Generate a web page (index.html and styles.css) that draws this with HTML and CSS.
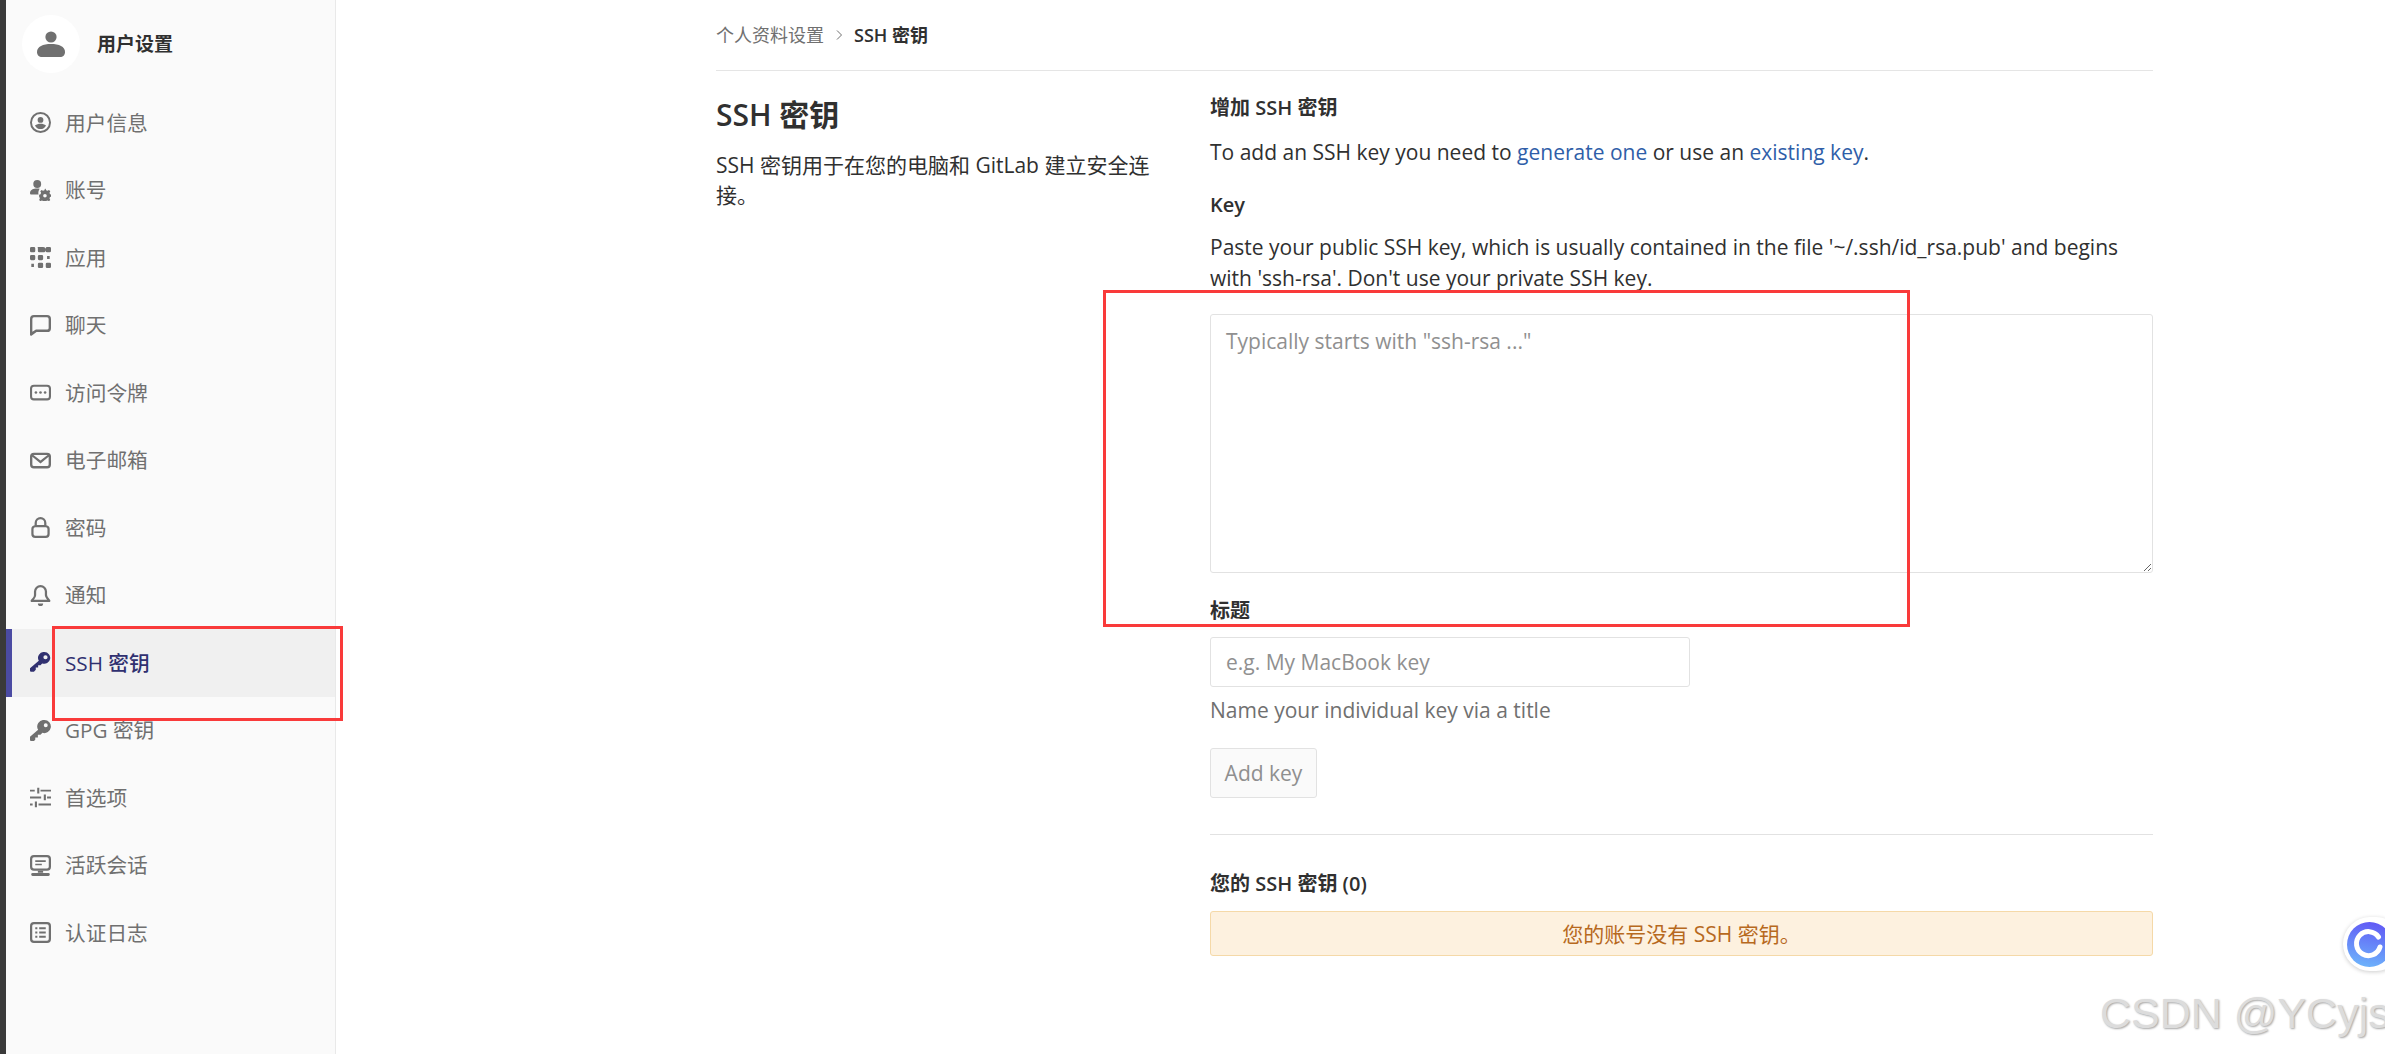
FILE: index.html
```html
<!DOCTYPE html>
<html lang="zh-CN">
<head>
<meta charset="utf-8">
<title>SSH 密钥</title>
<link rel="stylesheet" href="styles.css">
</head>
<body>
<div class="strip"></div>
<aside class="sidebar">
  <div class="side-head">
    <span class="avatar">
      <svg class="avatar-icon" viewBox="0 0 28 28"><circle cx="14" cy="7" r="5.6"/><path d="M0 22c0-5.500 6-8 14-8s14 2.500 14 8c0 3-2 5-5 5H5c-3 0-5-2-5-5z"/></svg>
    </span>
    <span class="side-title">用户设置</span>
  </div>
  <nav class="side-nav">
    <a class="nav-item"><svg class="ico" viewBox="0 0 16 16"><path fill-rule="evenodd" d="M8 0a8 8 0 1 1 0 16A8 8 0 0 1 8 0zm0 1.500a6.500 6.500 0 1 0 0 13 6.500 6.500 0 0 0 0-13z"/><circle cx="8" cy="6" r="2.200"/><path d="M3.800 10.200C5 9.400 6.400 9 8 9s3 .4 4.200 1.200C11.400 12 9.800 13 8 13s-3.400-1-4.200-2.800z"/></svg><span>用户信息</span></a>
    <a class="nav-item"><svg class="ico" viewBox="0 0 16 16"><circle cx="5.500" cy="3" r="3"/><path d="M0 10c0-2.500 2.500-3.500 5.500-3.500.7 0 1.300.1 1.900.2C6.500 8 6.100 9.500 6.500 11H1c-.6 0-1-.4-1-1z"/><path fill-rule="evenodd" d="M11.500 7l.4 1.200 1.100.4 1.100-.6 1 1-.6 1.100.4 1.100 1.100.4v1.400l-1.100.4-.4 1.100.6 1.100-1 1-1.100-.6-1.100.4-.4 1.100h-1.400l-.4-1.100-1.100-.4-1.100.6-1-1 .6-1.100-.4-1.100L6.500 13v-1.400l1.100-.4.4-1.100-.6-1.100 1-1 1.100.6 1.100-.4.400-1.200zm-.5 4a1.400 1.400 0 1 0 0 2.800 1.400 1.400 0 0 0 0-2.800z" transform="translate(0.500 -0.300) scale(.99)"/></svg><span>账号</span></a>
    <a class="nav-item"><svg class="ico" viewBox="0 0 16 16"><path d="M1 0h2a1 1 0 0 1 1 1v2a1 1 0 0 1-1 1H1a1 1 0 0 1-1-1V1a1 1 0 0 1 1-1zm5 0h4a1 1 0 0 1 0 4H7a1 1 0 0 1-1-1V1a1 1 0 0 1 0-1zm7 0h2a1 1 0 0 1 1 1v2a1 1 0 0 1-1 1h-2a1 1 0 0 1-1-1V1a1 1 0 0 1 1-1zM1 6h2a1 1 0 0 1 1 1v2a1 1 0 0 1-1 1H1a1 1 0 0 1-1-1V7a1 1 0 0 1 1-1zm6 0h2a1 1 0 0 1 1 1v2a1 1 0 0 1-1 1H7a1 1 0 0 1-1-1V7a1 1 0 0 1 1-1zm6 .800h2v2.400h-2zM1 12.800h2v2.400H1zm6-.800h2a1 1 0 0 1 1 1v2a1 1 0 0 1-1 1H7a1 1 0 0 1-1-1v-2a1 1 0 0 1 1-1zm6 0h2a1 1 0 0 1 1 1v2a1 1 0 0 1-1 1h-2a1 1 0 0 1-1-1v-2a1 1 0 0 1 1-1z"/></svg><span>应用</span></a>
    <a class="nav-item"><svg class="ico" viewBox="0 0 16 16"><path fill-rule="evenodd" d="M3 0h10a3 3 0 0 1 3 3v7a3 3 0 0 1-3 3H5l-3.600 2.700A.9.9 0 0 1 0 15V3a3 3 0 0 1 3-3zm0 1.800A1.200 1.200 0 0 0 1.800 3v9.800L4.500 11H13a1.200 1.200 0 0 0 1.200-1V3A1.200 1.200 0 0 0 13 1.800z"/></svg><span>聊天</span></a>
    <a class="nav-item"><svg class="ico" viewBox="0 0 16 16"><path fill-rule="evenodd" d="M3 2h10a3 3 0 0 1 3 3v6a3 3 0 0 1-3 3H3a3 3 0 0 1-3-3V5a3 3 0 0 1 3-3zm0 1.600A1.400 1.400 0 0 0 1.600 5v6A1.400 1.400 0 0 0 3 12.400h10a1.400 1.400 0 0 0 1.400-1.400V5A1.400 1.400 0 0 0 13 3.600z"/><circle cx="4.500" cy="8" r="1"/><circle cx="8" cy="8" r="1"/><circle cx="11.500" cy="8" r="1"/></svg><span>访问令牌</span></a>
    <a class="nav-item"><svg class="ico" viewBox="0 0 16 16"><path fill-rule="evenodd" d="M3 2h10a3 3 0 0 1 3 3v6a3 3 0 0 1-3 3H3a3 3 0 0 1-3-3V5a3 3 0 0 1 3-3zm-.4 1.800L8 8l5.400-4.200zM1.800 5.200V11A1.200 1.200 0 0 0 3 12.200h10a1.200 1.200 0 0 0 1.200-1.200V5.200L8 10.200z"/></svg><span>电子邮箱</span></a>
    <a class="nav-item"><svg class="ico" viewBox="0 0 16 16"><path fill-rule="evenodd" d="M8 0a4.500 4.500 0 0 1 4.500 4.500V6.200A3 3 0 0 1 15 9.100V13a3 3 0 0 1-3 3H4a3 3 0 0 1-3-3V9.100a3 3 0 0 1 2.500-2.900V4.500A4.500 4.500 0 0 1 8 0zm0 1.700a2.800 2.800 0 0 0-2.800 2.800v1.600h5.600V4.500A2.800 2.800 0 0 0 8 1.700zM4 7.800A1.300 1.300 0 0 0 2.700 9.100V13A1.300 1.300 0 0 0 4 14.300h8a1.300 1.300 0 0 0 1.300-1.300V9.100A1.300 1.300 0 0 0 12 7.800z"/></svg><span>密码</span></a>
    <a class="nav-item"><svg class="ico" viewBox="0 0 16 16"><path fill-rule="evenodd" d="M8 0a5 5 0 0 1 5 5v2.500c0 .8.600 1.800 2.200 3.700.7.900.4 1.800-.7 1.800h-13c-1.100 0-1.400-.9-.7-1.800C3 9.300 3 8.300 3 7.500V5a5 5 0 0 1 5-5zm0 1.700A3.300 3.300 0 0 0 4.700 5v2.500c0 1.200-.5 2.300-1.700 3.800h10c-1.200-1.500-1.700-2.600-1.700-3.800V5A3.300 3.300 0 0 0 8 1.700z"/><path d="M6 14h4a2 2 0 0 1-4 0z"/></svg><span>通知</span></a>
    <a class="nav-item is-active"><svg class="ico" viewBox="0 0 16 16"><path fill-rule="evenodd" d="M11 0a4.500 4.500 0 1 1-1.700 8.700L8 10H6.200v1.800H4.400v1.800l-1.400 1.400H.8A.8.8 0 0 1 0 14.200v-1.900l6.700-5.600A4.500 4.500 0 0 1 11 0zm.8 2.400a1.600 1.600 0 1 0 0 3.200 1.600 1.600 0 0 0 0-3.200z"/></svg><span>SSH 密钥</span></a>
    <a class="nav-item"><svg class="ico" viewBox="0 0 16 16"><path fill-rule="evenodd" d="M11 0a5 5 0 1 1-1.500 9.800L8 11.300H6v2H4V15l-1 1H.8A.8.8 0 0 1 0 15.200v-2.400l6.200-5.300A5 5 0 0 1 11 0zm1 2.500a1.500 1.500 0 1 0 0 3 1.500 1.500 0 0 0 0-3z"/></svg><span>GPG 密钥</span></a>
    <a class="nav-item"><svg class="ico" viewBox="0 0 16 16"><path d="M0 2h3.600v1.500H0zM5.500.6h1.600v4.300H5.500zM8 2h8v1.500H8zM0 7.200h8.500v1.500H0zM10.500 5.800h1.600v4.300h-1.600zM13 7.200h3v1.500h-3zM0 12.500h2v1.500H0zM3.700 11.100h1.600v4.300H3.700zM6.500 12.500H16V14H6.500z"/></svg><span>首选项</span></a>
    <a class="nav-item"><svg class="ico" viewBox="0 0 16 16"><path fill-rule="evenodd" d="M3 0h10a3 3 0 0 1 3 3v6a3 3 0 0 1-3 3H3a3 3 0 0 1-3-3V3a3 3 0 0 1 3-3zm0 1.700A1.300 1.300 0 0 0 1.700 3v6A1.300 1.300 0 0 0 3 10.300h10A1.300 1.300 0 0 0 14.300 9V3A1.300 1.300 0 0 0 13 1.700z"/><path d="M4 4h8v1.300H4zM4 6.600h5v1.300H4zM6 12h4v1.600H6zM2 13.800h12a1.100 1.100 0 0 1 0 2.200H2a1.100 1.100 0 0 1 0-2.200z"/></svg><span>活跃会话</span></a>
    <a class="nav-item"><svg class="ico" viewBox="0 0 16 16"><path fill-rule="evenodd" d="M3 0h10a3 3 0 0 1 3 3v10a3 3 0 0 1-3 3H3a3 3 0 0 1-3-3V3a3 3 0 0 1 3-3zm0 1.700A1.300 1.300 0 0 0 1.700 3v10A1.300 1.300 0 0 0 3 14.300h10a1.300 1.300 0 0 0 1.300-1.300V3A1.300 1.300 0 0 0 13 1.700z"/><path d="M4 4h1.600v1.600H4zM7 4h5v1.600H7zM4 7.200h1.600v1.600H4zM7 7.200h5v1.600H7zM4 10.400h1.600V12H4zM7 10.400h5V12H7z"/></svg><span>认证日志</span></a>
  </nav>
</aside>
<main class="main">
  <div class="crumbs">
    <span class="crumb-link">个人资料设置</span>
    <svg class="crumb-sep" viewBox="0 0 8 12"><path d="M2 1.500 6.500 6 2 10.500" fill="none" stroke="currentColor" stroke-width="1"/></svg>
    <span class="crumb-current">SSH 密钥</span>
  </div>
  <div class="columns">
    <section class="intro">
      <h3 class="intro-title">SSH 密钥</h3>
      <p class="intro-text">SSH 密钥用于在您的电脑和 GitLab 建立安全连接。</p>
    </section>
    <section class="content">
      <h5 class="sub-title">增加 SSH 密钥</h5>
      <p class="line add-line">To add an SSH key you need to <a class="link">generate one</a> or use an <a class="link">existing key</a>.</p>
      <label class="label key-label">Key</label>
      <p class="paste">Paste your public SSH key, which is usually contained in the file '~/.ssh/id_rsa.pub' and begins with 'ssh-rsa'. Don't use your private SSH key.</p>
      <textarea class="key-input" placeholder="Typically starts with &quot;ssh-rsa ...&quot;"></textarea>
      <label class="label title-label">标题</label>
      <input class="title-input" type="text" placeholder="e.g. My MacBook key">
      <p class="line help">Name your individual key via a title</p>
      <button class="add-btn" type="button">Add key</button>
      <hr class="rule">
      <h5 class="sub-title keys-title">您的 SSH 密钥 (0)</h5>
      <div class="alert">您的账号没有 SSH 密钥。</div>
    </section>
  </div>
</main>
<div class="mark mark-form"></div>
<div class="mark mark-nav"></div>
<div class="float-btn">
  <svg class="float-ico" viewBox="0 0 45 45"><defs><linearGradient id="fg" x1="0.600" y1="0" x2="0.400" y2="1"><stop offset="0" stop-color="#6159f5"/><stop offset="1" stop-color="#6db3fb"/></linearGradient></defs><circle cx="22.500" cy="22.500" r="22.500" fill="url(#fg)"/><path d="M33 25a12 12 0 1 1-1.500-10" fill="none" stroke="#fff" stroke-width="5" stroke-linecap="round"/></svg>
</div>
<div class="watermark">CSDN @YCyjs</div>
</body>
</html>
```
FILE: styles.css
```css
* { box-sizing: border-box; }
html, body { margin: 0; height: 100%; overflow: hidden; }
body {
  display: flex;
  background: #fff;
  color: #303030;
  font: 21px/30px "Open Sans", "Noto Sans CJK SC", sans-serif;
}
.strip { width: 6px; flex: none; background: #3a3a3a; }
.sidebar {
  width: 330px;
  flex: none;
  background: #fafafa;
  border-right: 1px solid #e9e9e9;
}
.side-head { display: flex; align-items: center; gap: 17px; height: 89px; padding: 0 0 1px 16px; }
.avatar {
  width: 58px; height: 58px; border-radius: 50%;
  background: #fff;
  display: flex; align-items: center; justify-content: center;
}
.avatar-icon { width: 28px; height: 28px; fill: #707070; }
.side-title { font-size: 19px; font-weight: 700; color: #303030; }
.nav-item {
  height: 67.5px;
  display: flex; align-items: center; gap: 14px;
  padding-left: 24px;
  color: #707070;
  font-size: 20.700px;
}
.ico { width: 21px; height: 21px; flex: none; fill: currentColor; }
.is-active {
  background: #f0f0f0;
  border-left: 6px solid #4b4ba3;
  padding-left: 18px;
  color: #303070;
  font-weight: 500;
}
.main { width: 1437px; margin-left: 380px; flex: none; }
.crumbs {
  height: 71px;
  border-bottom: 1px solid #e5e5e5;
  display: flex; align-items: center; gap: 8px;
  font-size: 18px;
}
.crumb-link { color: #707070; }
.crumb-sep { width: 8px; height: 12px; color: #707070; margin: 0 3px; }
.crumb-current { font-weight: 600; color: #303030; }
.columns { display: flex; }
.intro { width: 494px; flex: none; padding-top: 24px; }
.intro-title { margin: 0 0 15px; font-size: 30px; line-height: 40px; font-weight: 600; color: #303030; }
.intro-text { margin: 0; width: 440px; font-size: 21px; line-height: 30px; }
.content { flex: 1; padding-top: 22px; }
.sub-title { margin: 0; font-size: 20px; line-height: 30px; font-weight: 600; color: #303030; }
.line { margin: 0; }
.add-line { margin-top: 14px; }
.link { color: #1f6fb5; color: #2f5ea8; }
.label { display: block; font-weight: 600; font-size: 20px; line-height: 30px; }
.key-label { margin-top: 23px; }
.paste { margin: 12px 0 0; line-height: 31px; }
.key-input {
  display: block;
  width: 100%; height: 259px;
  margin-top: 20px;
  padding: 11px 15px;
  border: 1px solid #e2e2e2; border-radius: 3px;
  font: inherit;
  color: #303030;
  outline: none;
}
.key-input::placeholder, .title-input::placeholder { color: #909090; opacity: 1; }
.title-label { margin-top: 23px; }
.title-input {
  display: block;
  width: 480px; height: 50px;
  margin-top: 11px;
  padding: 0 15px;
  border: 1px solid #e2e2e2; border-radius: 3px;
  font: inherit;
  outline: none;
}
.help { margin-top: 8px; color: #707070; }
.add-btn {
  display: block;
  width: 107px; height: 50px;
  margin-top: 23px;
  padding: 0;
  background: #fafafa;
  border: 1px solid #e2e2e2; border-radius: 3px;
  font: inherit;
  color: #8f8f8f;
}
.rule { margin: 36px 0 0; border: 0; border-top: 1px solid #e2e2e2; }
.keys-title { margin-top: 34px; }
.alert {
  height: 45px;
  margin-top: 12px;
  display: flex; align-items: center; justify-content: center;
  background: #fdf1df;
  border: 1px solid #f5d9a8; border-radius: 3px;
  color: #b7691e;
}
.mark { position: absolute; border: 3px solid #f93a3a; }
.mark-form { left: 1103px; top: 290px; width: 807px; height: 337px; }
.mark-nav { left: 52px; top: 626px; width: 291px; height: 95px; }
.float-btn {
  position: absolute; left: 2343px; top: 917px;
  width: 60px; height: 54px;
  padding: 5px 0 0 4px;
  background: #fff;
  border-radius: 27px;
  box-shadow: 0 1px 4px rgba(0,0,0,.2);
}
.float-ico { display: block; width: 45px; height: 45px; }
.watermark {
  position: absolute; left: 2100px; top: 985px;
  font: 43px/56px "Liberation Sans", sans-serif;
  color: #dcdcdc;
  text-shadow: 1px 1px 2px rgba(0,0,0,.35);
  white-space: nowrap;
}
```
